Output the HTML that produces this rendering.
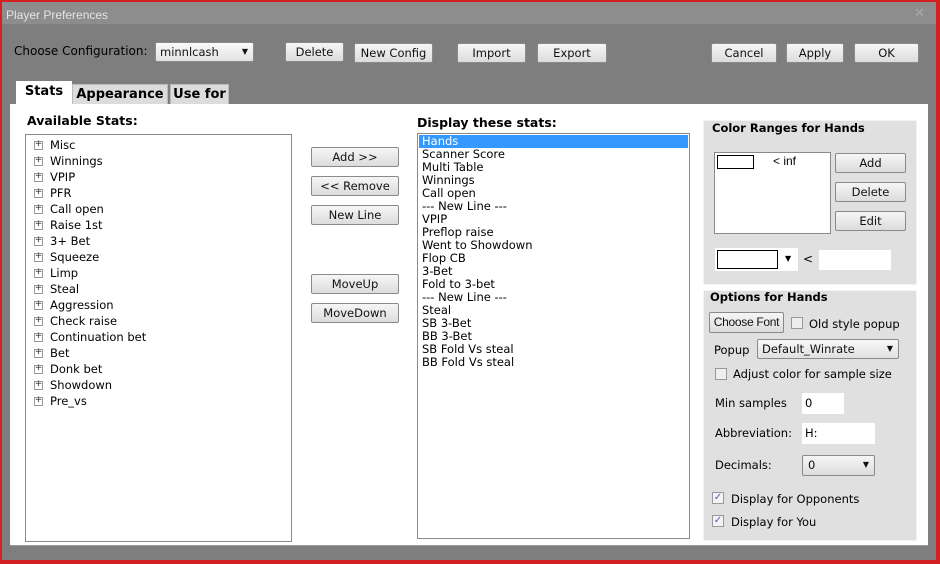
<!DOCTYPE html>
<html><head><meta charset="utf-8"><style>
*{margin:0;padding:0;box-sizing:border-box}
body{width:940px;height:564px;background:#d42020;position:relative;overflow:hidden;font-family:"DejaVu Sans","Liberation Sans",sans-serif;font-size:11px;color:#000}
.a{position:absolute}
.win{left:2px;top:2px;width:934px;height:558px;background:#7e7e7e}
.title{left:2px;top:2px;width:934px;height:22px;background:#8d8d8d;color:#e4e4e4;font-family:"Liberation Sans",sans-serif;font-size:12px;padding:6px 4px}
.btn{position:absolute;height:20px;border:1px solid #8a8a8a;border-radius:2px;background:linear-gradient(#f6f6f6,#dcdcdc);text-align:center;line-height:18px;font-size:11.5px;color:#111}
.panel{left:10px;top:104px;width:918px;height:442px;background:#fff;border-bottom:1px solid #999}
.tab{position:absolute;font-weight:bold;font-size:13px;text-align:center}
.box{position:absolute;background:#fff;border:1px solid #8a8a8a}
.tree div{height:16px;line-height:16px;padding-left:24px;position:relative;font-size:11.5px}
.tree div:before{content:"";position:absolute;left:8px;top:4px;width:7px;height:7px;border:1px solid #999;background:#fff}
.tree div:after{content:"+";position:absolute;left:8px;top:0;width:9px;text-align:center;font-size:9px;color:#333;line-height:15px}
.list div{height:13px;line-height:13px;padding-left:3px;font-size:11.5px}
.grp{position:absolute;background:#e0e0e0;border:1px solid #f4f4f4}
.gt{position:absolute;font-weight:bold;font-size:11.5px}
.cb{position:absolute;width:12px;height:12px;border:1px solid #999;background:#eee}
.ck{background:#f2f2f8;color:#5060a0;font-size:10px;line-height:10px;text-align:center}
.inp{position:absolute;background:#fff;height:21px;padding:3px 3px;font-size:11.5px}
</style></head><body>
<div class="a win"></div>
<div class="a title">Player Preferences</div>
<div class="a" style="left:914px;top:6px;color:#aaa;font-size:13px">✕</div>
<div class="a" style="left:14px;top:44px;font-size:12px">Choose Configuration:</div>
<div class="btn" style="left:155px;top:42px;width:99px;text-align:left;padding-left:4px;background:linear-gradient(#fafafa,#e2e2e2)">minnlcash<span style="position:absolute;right:5px;font-size:8px">▼</span></div>
<div class="btn" style="left:285px;top:42px;width:59px">Delete</div>
<div class="btn" style="left:354px;top:43px;width:79px">New Config</div>
<div class="btn" style="left:457px;top:43px;width:69px">Import</div>
<div class="btn" style="left:537px;top:43px;width:70px">Export</div>
<div class="btn" style="left:711px;top:43px;width:66px">Cancel</div>
<div class="btn" style="left:786px;top:43px;width:58px">Apply</div>
<div class="btn" style="left:854px;top:43px;width:65px">OK</div>
<div class="a panel"></div>
<div class="tab" style="left:16px;top:81px;width:56px;height:24px;background:#fff;line-height:22px">Stats</div>
<div class="tab" style="left:72px;top:84px;width:96px;height:20px;background:#dcdcdc;line-height:20px;border:1px solid #bbb;border-bottom:none">Appearance</div>
<div class="tab" style="left:170px;top:84px;width:59px;height:20px;background:#dcdcdc;line-height:20px;border:1px solid #bbb;border-bottom:none">Use for</div>
<div class="a" style="left:27px;top:113px;font-weight:bold;font-size:12.5px">Available Stats:</div>
<div class="box tree" style="left:25px;top:134px;width:267px;height:408px;padding-top:2px">
<div>Misc</div><div>Winnings</div><div>VPIP</div><div>PFR</div><div>Call open</div><div>Raise 1st</div><div>3+ Bet</div><div>Squeeze</div><div>Limp</div><div>Steal</div><div>Aggression</div><div>Check raise</div><div>Continuation bet</div><div>Bet</div><div>Donk bet</div><div>Showdown</div><div>Pre_vs</div>
</div>
<div class="btn" style="left:311px;top:147px;width:88px">Add &gt;&gt;</div>
<div class="btn" style="left:311px;top:176px;width:88px">&lt;&lt; Remove</div>
<div class="btn" style="left:311px;top:205px;width:88px">New Line</div>
<div class="btn" style="left:311px;top:274px;width:88px">MoveUp</div>
<div class="btn" style="left:311px;top:303px;width:88px">MoveDown</div>
<div class="a" style="left:417px;top:115px;font-weight:bold;font-size:12.5px">Display these stats:</div>
<div class="box list" style="left:417px;top:133px;width:273px;height:406px;padding:1px">
<div style="background:#3399ff;color:#fff">Hands</div><div>Scanner Score</div><div>Multi Table</div><div>Winnings</div><div>Call open</div><div>--- New Line ---</div><div>VPIP</div><div>Preflop raise</div><div>Went to Showdown</div><div>Flop CB</div><div>3-Bet</div><div>Fold to 3-bet</div><div>--- New Line ---</div><div>Steal</div><div>SB 3-Bet</div><div>BB 3-Bet</div><div>SB Fold Vs steal</div><div>BB Fold Vs steal</div>
</div>
<div class="grp" style="left:703px;top:120px;width:214px;height:165px"></div>
<div class="gt" style="left:712px;top:121px">Color Ranges for Hands</div>
<div class="box" style="left:714px;top:152px;width:117px;height:82px"></div>
<div class="a" style="left:717px;top:155px;width:37px;height:14px;border:1px solid #000"></div>
<div class="a" style="left:773px;top:154px;font-family:'Liberation Sans',sans-serif;font-size:12px">&lt; inf</div>
<div class="btn" style="left:835px;top:153px;width:71px">Add</div>
<div class="btn" style="left:835px;top:182px;width:71px">Delete</div>
<div class="btn" style="left:835px;top:211px;width:71px">Edit</div>
<div class="a" style="left:715px;top:248px;width:83px;height:23px;background:#fff"></div>
<div class="a" style="left:717px;top:250px;width:61px;height:19px;border:1px solid #000"></div>
<div class="a" style="left:785px;top:254px;font-size:8px">▼</div>
<div class="a" style="left:803px;top:252px;font-size:12px">&lt;</div>
<div class="a" style="left:819px;top:250px;width:72px;height:20px;background:#fff"></div>
<div class="grp" style="left:703px;top:290px;width:214px;height:251px"></div>
<div class="gt" style="left:710px;top:290px">Options for Hands</div>
<div class="btn" style="left:709px;top:312px;width:75px;height:21px;font-family:'Liberation Sans',sans-serif;font-size:12px;letter-spacing:-0.3px">Choose Font</div>
<div class="cb" style="left:791px;top:317px"></div>
<div class="a" style="left:809px;top:317px;font-size:11.5px">Old style popup</div>
<div class="a" style="left:714px;top:343px;font-size:11.5px">Popup</div>
<div class="btn" style="left:757px;top:339px;width:142px;text-align:left;padding-left:4px;background:linear-gradient(#f8f8f8,#e0e0e0)">Default_Winrate<span style="position:absolute;right:5px;font-size:8px">▼</span></div>
<div class="cb" style="left:715px;top:368px"></div>
<div class="a" style="left:733px;top:367px;font-size:11.5px">Adjust color for sample size</div>
<div class="a" style="left:715px;top:396px;font-size:11.5px">Min samples</div>
<div class="inp" style="left:802px;top:393px;width:42px">0</div>
<div class="a" style="left:715px;top:426px;font-size:11.5px">Abbreviation:</div>
<div class="inp" style="left:802px;top:423px;width:73px">H:</div>
<div class="a" style="left:715px;top:458px;font-size:11.5px">Decimals:</div>
<div class="btn" style="left:802px;top:455px;width:73px;height:21px;text-align:left;padding-left:5px">0<span style="position:absolute;right:5px;font-size:8px">▼</span></div>
<div class="cb ck" style="left:712px;top:492px">✓</div>
<div class="a" style="left:731px;top:492px;font-size:11.5px">Display for Opponents</div>
<div class="cb ck" style="left:712px;top:515px">✓</div>
<div class="a" style="left:731px;top:515px;font-size:11.5px">Display for You</div>
</body></html>
